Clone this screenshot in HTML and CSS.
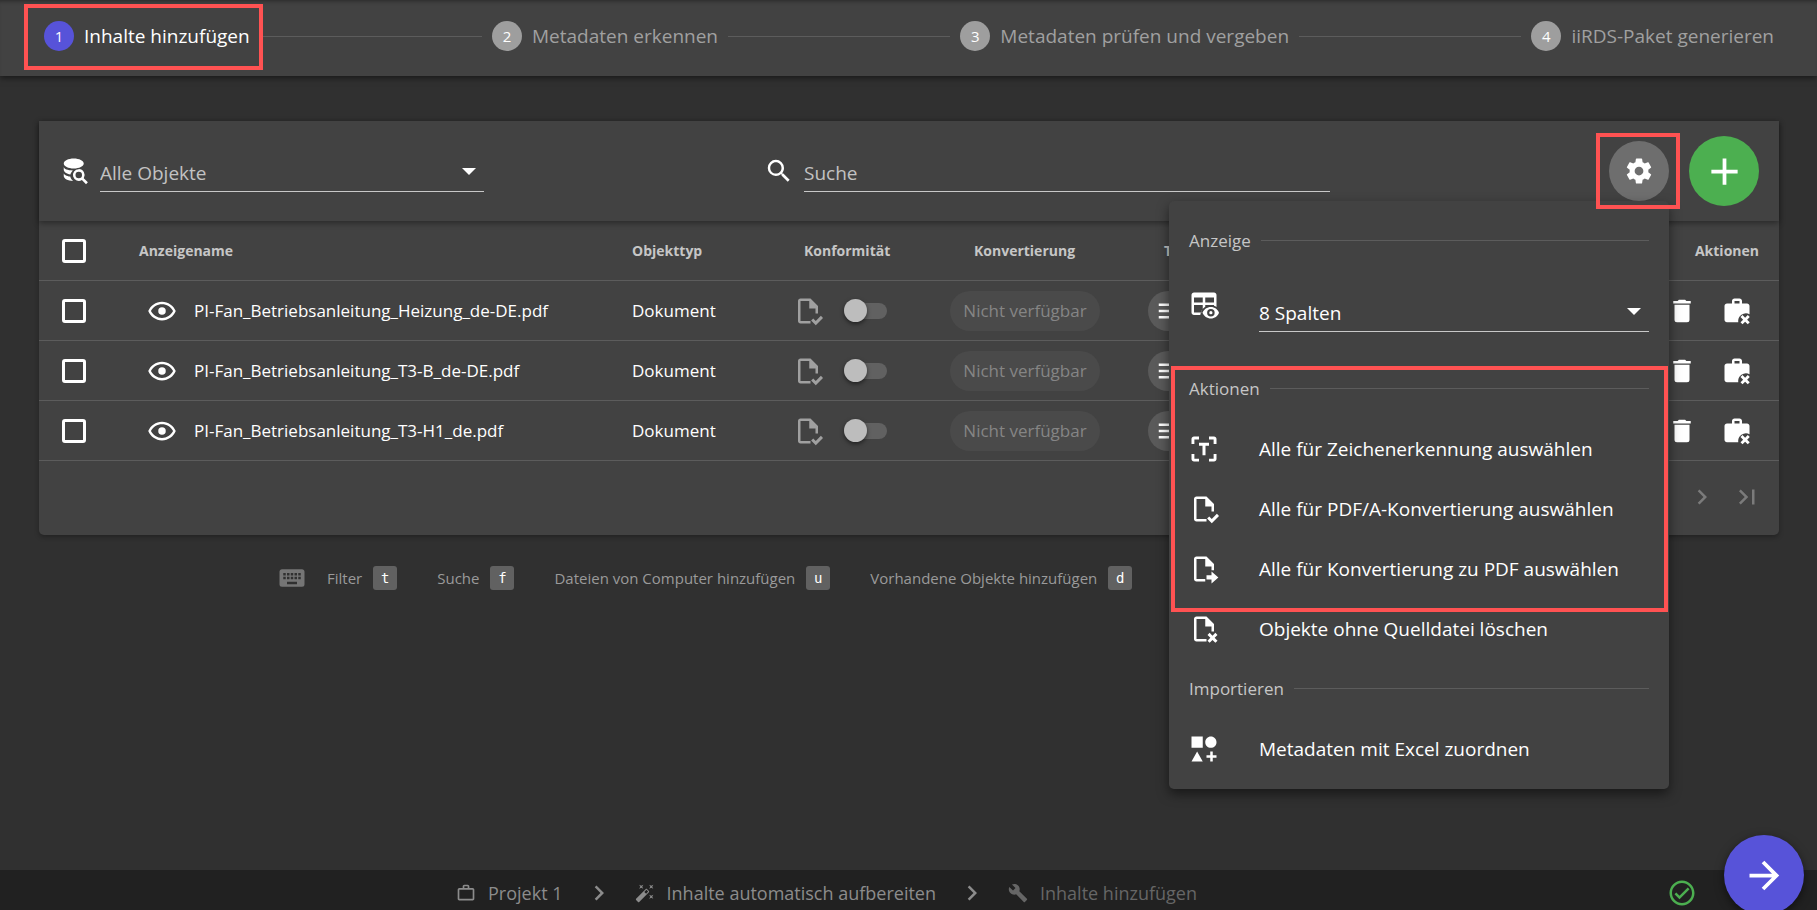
FILE: index.html
```
<!DOCTYPE html>
<html lang="de">
<head>
    <meta charset="UTF-8">
    <meta name="viewport" content="width=device-width, initial-scale=1.0">
    <title>Inhalte hinzufügen</title>
    <link rel="stylesheet" href="styles.css">
</head>
<body>

    <!-- Icons -->
    <svg class="sprite" aria-hidden="true">
        <symbol id="i-database" viewBox="0 0 24 24"><path d="M11 2C6.600 2 3 3.800 3 6s3.600 4 8 4 8-1.800 8-4-3.600-4-8-4zM3 8.500V11c0 1.700 2.200 3.200 5.300 3.800.3-1.300 1-2.400 2-3.300C6.200 11.300 3 10.400 3 8.500zM3 13.500V16c0 2.100 3.300 3.900 7.500 4-1.200-.9-2-2.200-2.300-3.600C5.200 16 3 15 3 13.500zM15 10.500a4.700 4.700 0 1 0 2.500 8.700l3.300 3.300 1.500-1.500-3.300-3.300A4.700 4.700 0 0 0 15 10.500zm0 2.100a2.600 2.600 0 1 1 0 5.200 2.600 2.600 0 0 1 0-5.200z"/></symbol>
        <symbol id="i-search" viewBox="0 0 24 24"><path d="M9.500,3A6.500,6.500 0 0,1 16,9.500C16,11.110 15.410,12.590 14.440,13.730L14.710,14H15.500L20.500,19L19,20.500L14,15.500V14.710L13.730,14.440C12.590,15.410 11.110,16 9.500,16A6.500,6.500 0 0,1 3,9.500A6.500,6.500 0 0,1 9.500,3M9.500,5C7,5 5,7 5,9.500C5,12 7,14 9.500,14C12,14 14,12 14,9.500C14,7 12,5 9.500,5Z"/></symbol>
        <symbol id="i-cog" viewBox="0 0 24 24"><path d="M12,15.500A3.500,3.500 0 0,1 8.500,12A3.500,3.500 0 0,1 12,8.500A3.500,3.500 0 0,1 15.500,12A3.500,3.500 0 0,1 12,15.500M19.430,12.970C19.470,12.650 19.500,12.330 19.500,12C19.500,11.670 19.470,11.340 19.430,11L21.540,9.370C21.730,9.220 21.780,8.950 21.660,8.730L19.660,5.270C19.540,5.050 19.270,4.960 19.050,5.050L16.560,6.050C16.040,5.660 15.500,5.320 14.870,5.070L14.500,2.420C14.460,2.180 14.250,2 14,2H10C9.750,2 9.540,2.180 9.500,2.420L9.130,5.070C8.500,5.320 7.960,5.660 7.440,6.050L4.950,5.050C4.730,4.960 4.460,5.050 4.340,5.270L2.340,8.730C2.210,8.950 2.270,9.220 2.460,9.370L4.570,11C4.530,11.340 4.500,11.670 4.500,12C4.500,12.330 4.530,12.650 4.570,12.970L2.460,14.630C2.270,14.780 2.210,15.050 2.340,15.270L4.340,18.730C4.460,18.950 4.730,19.030 4.950,18.950L7.440,17.940C7.960,18.340 8.500,18.680 9.130,18.930L9.500,21.580C9.540,21.820 9.750,22 10,22H14C14.250,22 14.460,21.820 14.500,21.580L14.870,18.930C15.500,18.670 16.040,18.340 16.560,17.940L19.050,18.950C19.270,19.030 19.540,18.950 19.660,18.730L21.660,15.270C21.780,15.050 21.730,14.780 21.540,14.630L19.430,12.970Z"/></symbol>
        <symbol id="i-plus" viewBox="0 0 24 24"><path d="M19,13H13V19H11V13H5V11H11V5H13V11H19V13Z"/></symbol>
        <symbol id="i-eye" viewBox="0 0 24 24"><path d="M12,9A3,3 0 0,1 15,12A3,3 0 0,1 12,15A3,3 0 0,1 9,12A3,3 0 0,1 12,9M12,4.500C17,4.500 21.270,7.610 23,12C21.270,16.390 17,19.500 12,19.500C7,19.500 2.730,16.390 1,12C2.730,7.610 7,4.500 12,4.500M3.180,12C4.830,15.360 8.240,17.500 12,17.500C15.760,17.500 19.170,15.360 20.820,12C19.170,8.640 15.760,6.500 12,6.500C8.240,6.500 4.830,8.640 3.180,12Z"/></symbol>
        <symbol id="i-file-check" viewBox="0 0 24 24"><path d="M6 2C4.900 2 4 2.900 4 4v16c0 1.100.9 2 2 2h8v-2H6V4h7v6h5v4h2V8l-6-6z"/><path d="M22.300 15.800 18.200 19.900l-2-2-1.700 1.700 3.700 3.700 5.800-5.800z"/></symbol>
        <symbol id="i-file-arrow" viewBox="0 0 24 24"><path d="M6 2C4.900 2 4 2.900 4 4v16c0 1.100.9 2 2 2h7v-2H6V4h7v6h5v3h2V8l-6-6z"/><path d="M14 17h4v-3l5.500 4.700-5.500 4.800v-3.200h-4z"/></symbol>
        <symbol id="i-file-x" viewBox="0 0 24 24"><path d="M6 2C4.900 2 4 2.900 4 4v16c0 1.100.9 2 2 2h8v-2H6V4h7v6h5v4h2V8l-6-6z"/><path d="m16.500 15 2.300 2.300 2.300-2.300 1.700 1.700-2.300 2.300 2.300 2.300-1.700 1.700-2.300-2.300-2.300 2.300-1.700-1.700 2.300-2.300-2.300-2.300z"/></symbol>
        <symbol id="i-ocr" viewBox="0 0 24 24"><path d="M2 8V4c0-1.100.9-2 2-2h4v2.300H4.300V8zM16 2h4c1.100 0 2 .9 2 2v4h-2.300V4.300H16zM2 16h2.300v3.700H8V22H4c-1.100 0-2-.9-2-2zM19.700 16H22v4c0 1.100-.9 2-2 2h-4v-2.300h3.700zM8 7h8v2.300h-2.800V17h-2.400V9.300H8z"/></symbol>
        <symbol id="i-table-eye" viewBox="0 0 24 24"><path fill-rule="evenodd" d="M4 2h16c1.100 0 2 .9 2 2v9.500a9 9 0 0 0-2-1V12h-7v1.300c-1.300.8-2.300 1.900-3 3.200V18h-.5L9 20H4c-1.100 0-2-.9-2-2V4c0-1.100.9-2 2-2zM4 6v4h7V6zm9 0v4h7V6zM4 12v6h5.500l1.500-3v-3z"/><path fill-rule="evenodd" d="M17.500 13.500c-3 0-5.600 1.900-6.700 4.600 1.100 2.700 3.700 4.600 6.700 4.600s5.600-1.900 6.500-4.600c-.9-2.700-3.500-4.600-6.500-4.600zm0 1.600a3 3 0 1 1 0 6 3 3 0 0 1 0-6zm0 1.700a1.300 1.300 0 1 0 0 2.600 1.300 1.300 0 0 0 0-2.600z"/></symbol>
        <symbol id="i-shapes" viewBox="0 0 24 24"><path d="M2,2H11V11H2V2M17.500,2C20,2 22,4 22,6.500C22,9 20,11 17.500,11C15,11 13,9 13,6.500C13,4 15,2 17.500,2M6.500,14L11,22H2L6.500,14M19,17H22V19H19V22H17V19H14V17H17V14H19V17Z"/></symbol>
        <symbol id="i-lines" viewBox="0 0 24 24"><path d="M3 6h18v2H3zM3 11h18v2H3zM3 16h18v2H3z"/></symbol>
        <symbol id="i-trash" viewBox="0 0 24 24"><path d="M19,4H15.500L14.500,3H9.500L8.500,4H5V6H19M6,19A2,2 0 0,0 8,21H16A2,2 0 0,0 18,19V7H6V19Z"/></symbol>
        <symbol id="i-case-x" viewBox="0 0 24 24"><path fill-rule="evenodd" d="M10 2h4c1.100 0 2 .9 2 2v2h4c1.100 0 2 .9 2 2v6.500a6.300 6.300 0 0 0-9 6.500H4c-1.100 0-2-.9-2-2V8c0-1.100.9-2 2-2h4V4c0-1.100.9-2 2-2zm0 2v2h4V4z"/><path d="m16.400 15.200 2.100 2.100 2.100-2.100 1.600 1.600-2.100 2.100 2.100 2.100-1.600 1.600-2.100-2.100-2.100 2.100-1.600-1.600 2.100-2.100-2.100-2.100z"/></symbol>
        <symbol id="i-chevron" viewBox="0 0 24 24"><path d="M8.590,16.580L13.170,12L8.590,7.410L10,6L16,12L10,18L8.590,16.580Z"/></symbol>
        <symbol id="i-last" viewBox="0 0 24 24"><path d="M5.590,7.410L10.180,12L5.590,16.590L7,18L13,12L7,6L5.590,7.410M16,6H18V18H16V6Z"/></symbol>
        <symbol id="i-keyboard" viewBox="0 0 24 24"><path d="M19,10H17V8H19M19,13H17V11H19M16,10H14V8H16M16,13H14V11H16M16,17H8V15H16M7,10H5V8H7M7,13H5V11H7M8,11H10V13H8M8,8H10V10H8M11,11H13V13H11M11,8H13V10H11M20,5H4C2.890,5 2,5.890 2,7V17A2,2 0 0,0 4,19H20A2,2 0 0,0 22,17V7C22,5.890 21.100,5 20,5Z"/></symbol>
        <symbol id="i-case" viewBox="0 0 24 24"><path fill-rule="evenodd" d="M10 2h4c1.100 0 2 .9 2 2v2h4c1.100 0 2 .9 2 2v11c0 1.100-.9 2-2 2H4c-1.100 0-2-.9-2-2V8c0-1.100.9-2 2-2h4V4c0-1.100.9-2 2-2zm0 2v2h4V4zM4 8v11h16V8z"/></symbol>
        <symbol id="i-wand" viewBox="0 0 24 24"><path d="M7.500,5.600L5,7L6.400,4.500L5,2L7.500,3.400L10,2L8.600,4.500L10,7L7.500,5.600M19.500,15.400L22,14L20.600,16.500L22,19L19.500,17.600L17,19L18.400,16.500L17,14L19.500,15.400M22,2L20.600,4.500L22,7L19.500,5.600L17,7L18.400,4.500L17,2L19.500,3.400L22,2M13.340,12.780L15.780,10.340L13.660,8.220L11.220,10.660L13.340,12.780M14.370,7.290L16.710,9.630C17.100,10 17.100,10.650 16.710,11.040L5.040,22.710C4.650,23.100 4,23.100 3.630,22.710L1.290,20.370C0.900,20 0.900,19.350 1.290,18.960L12.960,7.290C13.350,6.900 14,6.900 14.370,7.290Z"/></symbol>
        <symbol id="i-wrench" viewBox="0 0 24 24"><path d="M22.700,19L13.600,9.900C14.500,7.600 14,4.900 12.100,3C10.100,1 7.100,0.600 4.700,1.700L9,6L6,9L1.600,4.700C0.400,7.100 0.900,10.100 2.900,12.100C4.800,14 7.500,14.500 9.800,13.600L18.900,22.700C19.300,23.100 19.900,23.100 20.300,22.700L22.600,20.400C23.100,20 23.100,19.300 22.700,19Z"/></symbol>
        <symbol id="i-check" viewBox="0 0 24 24"><path d="M12 2C6.500 2 2 6.500 2 12S6.500 22 12 22 22 17.500 22 12 17.500 2 12 2M12 20C7.590 20 4 16.410 4 12S7.590 4 12 4 20 7.590 20 12 16.410 20 12 20M16.590 7.580L10 14.170L7.410 11.590L6 13L10 17L18 9L16.590 7.580Z"/></symbol>
        <symbol id="i-arrow" viewBox="0 0 24 24"><path d="M4,11V13H16L10.500,18.500L11.920,19.920L19.840,12L11.920,4.080L10.500,5.500L16,11H4Z"/></symbol>
    </svg>

    <header class="stepper">
        <div class="step active marked mark-step"><span class="number">1</span>Inhalte hinzufügen</div>
        <div class="line"></div>
        <div class="step"><span class="number">2</span>Metadaten erkennen</div>
        <div class="line"></div>
        <div class="step"><span class="number">3</span>Metadaten prüfen und vergeben</div>
        <div class="line"></div>
        <div class="step"><span class="number">4</span>iiRDS-Paket generieren</div>
    </header>

    <main>
        <section class="card">
            <div class="toolbar">
                <label class="filter" for="filter">
                    <svg class="icon"><use href="#i-database"/></svg>
                    <span class="select">
                        <select id="filter" aria-label="Filter"><option>Alle Objekte</option></select>
                    </span>
                </label>
                <label class="search" for="search">
                    <svg class="icon"><use href="#i-search"/></svg>
                    <input type="text" id="search" placeholder="Suche" aria-label="Suche">
                </label>
                <div class="tools">
                    <button class="settings marked mark-settings" id="settings" aria-label="Einstellungen"><svg class="icon"><use href="#i-cog"/></svg></button>
                    <button class="add" aria-label="Hinzufügen"><svg class="icon big"><use href="#i-plus"/></svg></button>

                    <div class="menu" id="menu">
                        <h2>Anzeige</h2>
                        <label class="columns" for="columns">
                            <svg class="icon"><use href="#i-table-eye"/></svg>
                            <span class="select">
                                <select id="columns" aria-label="Spalten"><option>8 Spalten</option></select>
                            </span>
                        </label>
                        <div class="marked mark-actions">
                            <h2>Aktionen</h2>
                            <button class="item"><svg class="icon"><use href="#i-ocr"/></svg>Alle für Zeichenerkennung auswählen</button>
                            <button class="item"><svg class="icon"><use href="#i-file-check"/></svg>Alle für PDF/A-Konvertierung auswählen</button>
                            <button class="item"><svg class="icon"><use href="#i-file-arrow"/></svg>Alle für Konvertierung zu PDF auswählen</button>
                        </div>
                        <button class="item"><svg class="icon"><use href="#i-file-x"/></svg>Objekte ohne Quelldatei löschen</button>
                        <h2>Importieren</h2>
                        <button class="item"><svg class="icon"><use href="#i-shapes"/></svg>Metadaten mit Excel zuordnen</button>
                    </div>
                </div>
            </div>

            <table>
                <colgroup>
                    <col class="col-check">
                    <col>
                    <col class="col-type">
                    <col class="col-conform">
                    <col class="col-convert">
                    <col class="col-text">
                    <col class="col-actions">
                </colgroup>
                <thead>
                    <tr>
                        <th><input type="checkbox" aria-label="Alle auswählen"></th>
                        <th>Anzeigename</th>
                        <th>Objekttyp</th>
                        <th class="conform-head">Konformität</th>
                        <th class="convert-head">Konvertierung</th>
                        <th class="text-head">T</th>
                        <th class="actions-head">Aktionen</th>
                    </tr>
                </thead>
                <tbody>
                    <tr>
                        <td><input type="checkbox" aria-label="Auswählen"></td>
                        <td><div class="name"><svg class="icon"><use href="#i-eye"/></svg>PI-Fan_Betriebsanleitung_Heizung_de-DE.pdf</div></td>
                        <td>Dokument</td>
                        <td><div class="conform"><svg class="icon"><use href="#i-file-check"/></svg><input type="checkbox" class="toggle" aria-label="PDF/A"></div></td>
                        <td><button class="chip" disabled>Nicht verfügbar</button></td>
                        <td><button class="round" aria-label="Text"><svg class="icon"><use href="#i-lines"/></svg></button></td>
                        <td><div class="actions"><button aria-label="Löschen"><svg class="icon"><use href="#i-trash"/></svg></button><button aria-label="Entfernen"><svg class="icon"><use href="#i-case-x"/></svg></button></div></td>
                    </tr>
                    <tr>
                        <td><input type="checkbox" aria-label="Auswählen"></td>
                        <td><div class="name"><svg class="icon"><use href="#i-eye"/></svg>PI-Fan_Betriebsanleitung_T3-B_de-DE.pdf</div></td>
                        <td>Dokument</td>
                        <td><div class="conform"><svg class="icon"><use href="#i-file-check"/></svg><input type="checkbox" class="toggle" aria-label="PDF/A"></div></td>
                        <td><button class="chip" disabled>Nicht verfügbar</button></td>
                        <td><button class="round" aria-label="Text"><svg class="icon"><use href="#i-lines"/></svg></button></td>
                        <td><div class="actions"><button aria-label="Löschen"><svg class="icon"><use href="#i-trash"/></svg></button><button aria-label="Entfernen"><svg class="icon"><use href="#i-case-x"/></svg></button></div></td>
                    </tr>
                    <tr>
                        <td><input type="checkbox" aria-label="Auswählen"></td>
                        <td><div class="name"><svg class="icon"><use href="#i-eye"/></svg>PI-Fan_Betriebsanleitung_T3-H1_de.pdf</div></td>
                        <td>Dokument</td>
                        <td><div class="conform"><svg class="icon"><use href="#i-file-check"/></svg><input type="checkbox" class="toggle" aria-label="PDF/A"></div></td>
                        <td><button class="chip" disabled>Nicht verfügbar</button></td>
                        <td><button class="round" aria-label="Text"><svg class="icon"><use href="#i-lines"/></svg></button></td>
                        <td><div class="actions"><button aria-label="Löschen"><svg class="icon"><use href="#i-trash"/></svg></button><button aria-label="Entfernen"><svg class="icon"><use href="#i-case-x"/></svg></button></div></td>
                    </tr>
                </tbody>
            </table>

            <div class="paginator">
                <button disabled aria-label="Nächste Seite"><svg class="icon"><use href="#i-chevron"/></svg></button>
                <button disabled aria-label="Letzte Seite"><svg class="icon"><use href="#i-last"/></svg></button>
            </div>
        </section>

        <div class="shortcuts">
            <svg class="icon"><use href="#i-keyboard"/></svg>
            <span>Filter <kbd>t</kbd></span>
            <span>Suche <kbd>f</kbd></span>
            <span>Dateien von Computer hinzufügen <kbd>u</kbd></span>
            <span>Vorhandene Objekte hinzufügen <kbd>d</kbd></span>
        </div>
    </main>

    <footer>
        <nav>
            <a href="#"><svg class="icon small"><use href="#i-case"/></svg>Projekt 1</a>
            <svg class="icon"><use href="#i-chevron"/></svg>
            <a href="#"><svg class="icon small"><use href="#i-wand"/></svg>Inhalte automatisch aufbereiten</a>
            <svg class="icon"><use href="#i-chevron"/></svg>
            <a href="#" class="current"><svg class="icon small"><use href="#i-wrench"/></svg>Inhalte hinzufügen</a>
        </nav>
        <div class="status"><svg class="icon"><use href="#i-check"/></svg></div>
    </footer>

    <button class="next" aria-label="Weiter"><svg class="icon big"><use href="#i-arrow"/></svg></button>

    <script>
        // Menü über das Zahnrad ein- und ausblenden
        document.getElementById('settings').addEventListener('click', function () {
            const menu = document.getElementById('menu');
            menu.hidden = !menu.hidden;
        });
    </script>

</body>
</html>
```
FILE: styles.css
```
* {
    box-sizing: border-box;
}

body {
    font-family: "Segoe UI", "Open Sans", "Noto Sans", sans-serif;
    font-size: 19px;
    margin: 0;
    min-height: 100vh;
    display: flex;
    flex-direction: column;
    background: #303030;
    color: white;
    overflow: hidden;
}

button, input, select {
    font: inherit;
    color: inherit;
}

button {
    background: none;
    border: none;
    padding: 0;
    cursor: pointer;
}

.sprite {
    display: none;
}

.icon {
    width: 30px;
    height: 30px;
    flex: none;
    display: block;
    fill: currentColor;
}

.icon.big {
    width: 45px;
    height: 45px;
}

.icon.small {
    width: 20px;
    height: 20px;
}

/* Rote Markierungen */
.marked {
    position: relative;
}

.marked::after {
    content: "";
    position: absolute;
    border: 4px solid #ff5252;
    pointer-events: none;
    z-index: 5;
}

.mark-step::after {
    inset: -17px -13px -19px -20px;
}

.mark-settings::after {
    inset: -8px -11px -8px -13px;
}

.mark-actions::after {
    inset: 7px 1px -13px 2px;
}

/* Schritte */
.stepper {
    display: flex;
    align-items: center;
    gap: 10px;
    height: 76px;
    padding: 0 43px 4px 44px;
    background: #424242;
    box-shadow: 0 2px 6px rgba(0, 0, 0, 0.5), inset 0 4px 4px -3px rgba(0, 0, 0, 0.4);
}

.step {
    display: flex;
    align-items: center;
    gap: 10px;
    height: 30px;
    color: #a0a0a0;
    white-space: nowrap;
}

.step.active {
    color: white;
}

.number {
    width: 30px;
    height: 30px;
    border-radius: 50%;
    background: #9e9e9e;
    color: white;
    font-size: 15px;
    line-height: 30px;
    text-align: center;
}

.active .number {
    background: #5753d9;
}

.line {
    flex: 1;
    height: 1px;
    background: #5c5c5c;
}

/* Karte */
main {
    flex: 1;
    padding: 45px 38px 0 39px;
}

.card {
    background: #424242;
    border-radius: 0 0 5px 5px;
    box-shadow: 0 2px 5px rgba(0, 0, 0, 0.3);
}

.toolbar {
    position: relative;
    display: flex;
    align-items: center;
    height: 100px;
    padding: 0 20px 0 21px;
    box-shadow: 0 2px 6px rgba(0, 0, 0, 0.4);
}

.filter, .search {
    display: flex;
    align-items: center;
    gap: 10px;
}

.filter {
    width: 424px;
    margin-right: 280px;
}

.search {
    width: 566px;
}

.select {
    position: relative;
    flex: 1;
    display: block;
}

.select::after {
    content: "";
    position: absolute;
    right: 8px;
    top: 18px;
    border: 7px solid transparent;
    border-top-color: white;
    border-bottom: 0;
    pointer-events: none;
}

.select select, .search input {
    appearance: none;
    width: 100%;
    height: 42px;
    padding: 4px 0 0;
    background: none;
    border: none;
    border-bottom: 1px solid #c8c8c8;
    border-radius: 0;
    outline: none;
}

.filter select, .search input::placeholder {
    color: #c2c2c2;
    opacity: 1;
}

.search input {
    flex: 1;
}

.tools {
    position: relative;
    display: flex;
    align-items: center;
    gap: 20px;
    margin-left: auto;
}

.settings, .add, .next {
    display: flex;
    align-items: center;
    justify-content: center;
    border-radius: 50%;
}

.settings {
    width: 60px;
    height: 60px;
    background: #6e6e6e;
}

.add {
    width: 70px;
    height: 70px;
    background: #4caf50;
}

/* Menü */
.menu {
    position: absolute;
    top: 65px;
    right: 90px;
    width: 500px;
    padding: 10px 0;
    background: #424242;
    border-radius: 5px;
    box-shadow: 0 5px 12px rgba(0, 0, 0, 0.5);
    z-index: 3;
}

.menu[hidden] {
    display: none;
}

.menu h2 {
    display: flex;
    align-items: center;
    gap: 10px;
    height: 60px;
    margin: 0;
    padding: 0 20px 2px;
    font-size: 17px;
    font-weight: normal;
    color: #c6c6c6;
}

.menu h2::after {
    content: "";
    flex: 1;
    height: 1px;
    background: #5c5c5c;
}

.columns {
    display: flex;
    align-items: flex-start;
    gap: 40px;
    height: 88px;
    padding: 19px 20px 0;
}

.item {
    display: flex;
    align-items: center;
    gap: 40px;
    width: 100%;
    height: 60px;
    padding: 0 20px;
    text-align: left;
    white-space: nowrap;
}

/* Tabelle */
table {
    width: 100%;
    table-layout: fixed;
    border-collapse: separate;
    border-spacing: 0;
}

th, td {
    height: 60px;
    padding: 0;
    border-bottom: 1px solid #5c5c5c;
    text-align: left;
    font-size: 17px;
    white-space: nowrap;
}

th {
    font-size: 14px;
    font-weight: bold;
    color: #c6c6c6;
}

.col-check {
    width: 100px;
}

.col-type {
    width: 161px;
}

.col-conform {
    width: 157px;
}

.col-convert {
    width: 198px;
}

.col-text {
    width: 514px;
}

.col-actions {
    width: 117px;
}

.conform-head {
    padding-left: 11px;
}

.convert-head {
    padding-left: 24px;
}

.text-head {
    padding-left: 16px;
}

.actions-head {
    padding-right: 20px;
    text-align: right;
}

th input, td > input {
    appearance: none;
    display: block;
    width: 24px;
    height: 24px;
    margin: 0 0 0 23px;
    border: 3px solid white;
    border-radius: 3px;
}

.name, .conform, .actions {
    display: flex;
    align-items: center;
}

.name {
    gap: 17px;
    padding-left: 8px;
}

.conform {
    gap: 21px;
}

.conform .icon {
    color: #a0a0a0;
}

.toggle {
    appearance: none;
    display: flex;
    align-items: center;
    width: 43px;
    height: 16px;
    margin: 0;
    border-radius: 8px;
    background: #616161;
}

.toggle::before {
    content: "";
    width: 23px;
    height: 23px;
    border-radius: 50%;
    background: #bdbdbd;
    box-shadow: 0 2px 4px rgba(0, 0, 0, 0.5);
}

.chip {
    display: block;
    width: 150px;
    height: 40px;
    border-radius: 20px;
    background: #4a4a4a;
    color: #858585;
}

.round {
    display: block;
    height: 40px;
    padding: 0 7px;
    border-radius: 20px;
    background: #5a5a5a;
}

.actions {
    gap: 25px;
    padding-left: 5px;
}

.paginator {
    display: flex;
    justify-content: flex-end;
    gap: 15px;
    height: 74px;
    padding: 21px 17px 0 0;
}

.paginator button {
    height: 30px;
    color: #7b7b7b;
}

/* Tastenkürzel */
.shortcuts {
    display: flex;
    align-items: center;
    gap: 40px;
    margin-top: 28px;
    padding-left: 238px;
    font-size: 15px;
    color: #9a9a9a;
}

.shortcuts .icon {
    margin-right: -20px;
    color: #757575;
}

.shortcuts span {
    display: flex;
    align-items: center;
    gap: 11px;
}

kbd {
    width: 24px;
    height: 24px;
    border-radius: 3px;
    background: #616161;
    color: white;
    font: 14px/24px "DejaVu Sans Mono", monospace;
    text-align: center;
}

/* Fußzeile */
footer {
    display: flex;
    align-items: center;
    height: 40px;
    padding-top: 6px;
    background: #212121;
}

nav {
    flex: 1;
    display: flex;
    align-items: center;
    justify-content: center;
    gap: 21px;
    padding-right: 14px;
    font-size: 18px;
    font-weight: 500;
    color: #8c8c8c;
}

nav a {
    display: flex;
    align-items: center;
    gap: 12px;
    color: #8c8c8c;
    text-decoration: none;
}

nav a.current {
    color: #666;
}

.status {
    width: 150px;
    color: #4caf50;
}

.next {
    position: fixed;
    right: 13px;
    bottom: -5px;
    width: 80px;
    height: 80px;
    background: #5753d9;
    box-shadow: 0 3px 10px rgba(0, 0, 0, 0.5);
}
```
